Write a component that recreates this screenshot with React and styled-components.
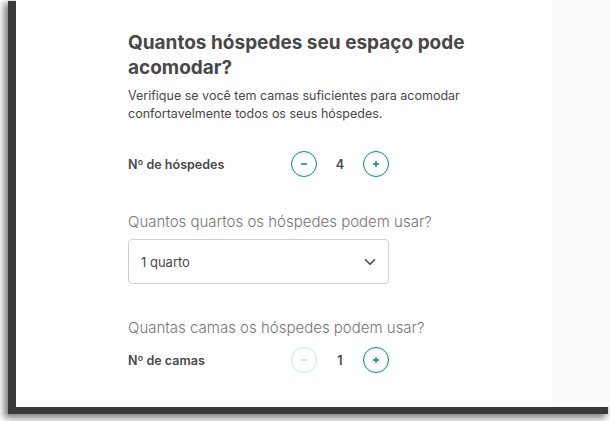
import React, { useState } from 'react'
import styled, { createGlobalStyle } from 'styled-components'

const GlobalStyle = createGlobalStyle`
    html, body {
        margin: 0;
        padding: 0;
        background: #ffffff;
    }
    body {
        font-family: Inter, "Noto Sans", "Liberation Sans", sans-serif;
        color: #484848;
    }
`

const Screen = styled.div`
    display: flex;
    width: 610px;
    height: 421px;
    overflow: hidden;
`

const Window = styled.div`
    display: flex;
    margin-left: 16px;
    width: 594px;
    height: 407px;
    background: #ffffff;
    box-shadow: -5px 4px 0 3px #3a3a3a, -8px 7px 7px 4px rgba(40, 40, 40, 0.6);
`

const Main = styled.main`
    flex: 1;
    padding: 30px 0 0 112px;
`

const Aside = styled.aside`
    width: 58px;
    background: #fafafa;
`

const Title = styled.h1`
    margin: 0;
    width: 350px;
    font-size: 19px;
    line-height: 25px;
    font-weight: 700;
    color: #484848;
`

const Description = styled.p`
    margin: 7px 0 0;
    width: 350px;
    font-size: 12.5px;
    line-height: 18px;
    color: #484848;
`

const Question = styled.h2`
    margin: ${p => p.$top}px 0 0;
    font-size: 15px;
    line-height: 20px;
    font-weight: 300;
    color: #767676;
`

const CounterRow = styled.div`
    display: flex;
    align-items: center;
    height: 26px;
    margin-top: ${p => p.$top}px;
`

const RowLabel = styled.span`
    width: 163px;
    font-size: 12.5px;
    font-weight: 600;
    color: #484848;
`

const RoundButton = styled.button`
    display: flex;
    align-items: center;
    justify-content: center;
    width: 26px;
    height: 26px;
    padding: 0;
    border-radius: 50%;
    border: 1.5px solid ${p => (p.disabled ? '#c6e3e4' : '#008489')};
    background: #ffffff;
    color: ${p => (p.disabled ? '#c6e3e4' : '#008489')};
    cursor: ${p => (p.disabled ? 'default' : 'pointer')};
`

const Count = styled.span`
    width: 46px;
    text-align: center;
    font-size: 12.5px;
    font-weight: 600;
    color: #484848;
`

const Select = styled.div`
    display: flex;
    align-items: center;
    justify-content: space-between;
    box-sizing: border-box;
    width: 261px;
    height: 45px;
    margin-top: 7px;
    padding: 0 12px 0 12px;
    border: 1px solid #d0d0d0;
    border-radius: 4px;
    font-size: 13px;
    color: #484848;
`

const MinusIcon = () => (
    <svg width="8" height="8" viewBox="0 0 8 8">
        <path d="M1.5 4h5" stroke="currentColor" strokeWidth="1.4" strokeLinecap="round" />
    </svg>
)

const PlusIcon = () => (
    <svg width="8" height="8" viewBox="0 0 8 8">
        <path d="M1.5 4h5M4 1.5v5" stroke="currentColor" strokeWidth="1.4" strokeLinecap="round" />
    </svg>
)

const Chevron = () => (
    <svg width="12" height="8" viewBox="0 0 12 8">
        <path d="M1.5 1.8 6 6.2l4.5-4.4" fill="none" stroke="#484848" strokeWidth="1.6" strokeLinecap="round" strokeLinejoin="round" />
    </svg>
)

const Counter = ({ label, value, min, onChange, top }) => (
    <CounterRow $top={top}>
        <RowLabel>{label}</RowLabel>
        <RoundButton disabled={value <= min} onClick={() => onChange(value - 1)}>
            <MinusIcon />
        </RoundButton>
        <Count>{value}</Count>
        <RoundButton onClick={() => onChange(value + 1)}>
            <PlusIcon />
        </RoundButton>
    </CounterRow>
)

const App = () => {
    const [guests, setGuests] = useState(4)
    const [beds, setBeds] = useState(1)

    return (
        <>
            <GlobalStyle />
            <Screen>
                <Window>
                    <Main>
                        <Title>Quantos hóspedes seu espaço pode acomodar?</Title>
                        <Description>
                            Verifique se você tem camas suficientes para acomodar confortavelmente todos os seus hóspedes.
                        </Description>
                        <Counter label="Nº de hóspedes" value={guests} min={1} onChange={setGuests} top={28} />
                        <Question $top={35}>Quantos quartos os hóspedes podem usar?</Question>
                        <Select>
                            <span>1 quarto</span>
                            <Chevron />
                        </Select>
                        <Question $top={34}>Quantas camas os hóspedes podem usar?</Question>
                        <Counter label="Nº de camas" value={beds} min={1} onChange={setBeds} top={9} />
                    </Main>
                    <Aside />
                </Window>
            </Screen>
        </>
    )
}

export default App
